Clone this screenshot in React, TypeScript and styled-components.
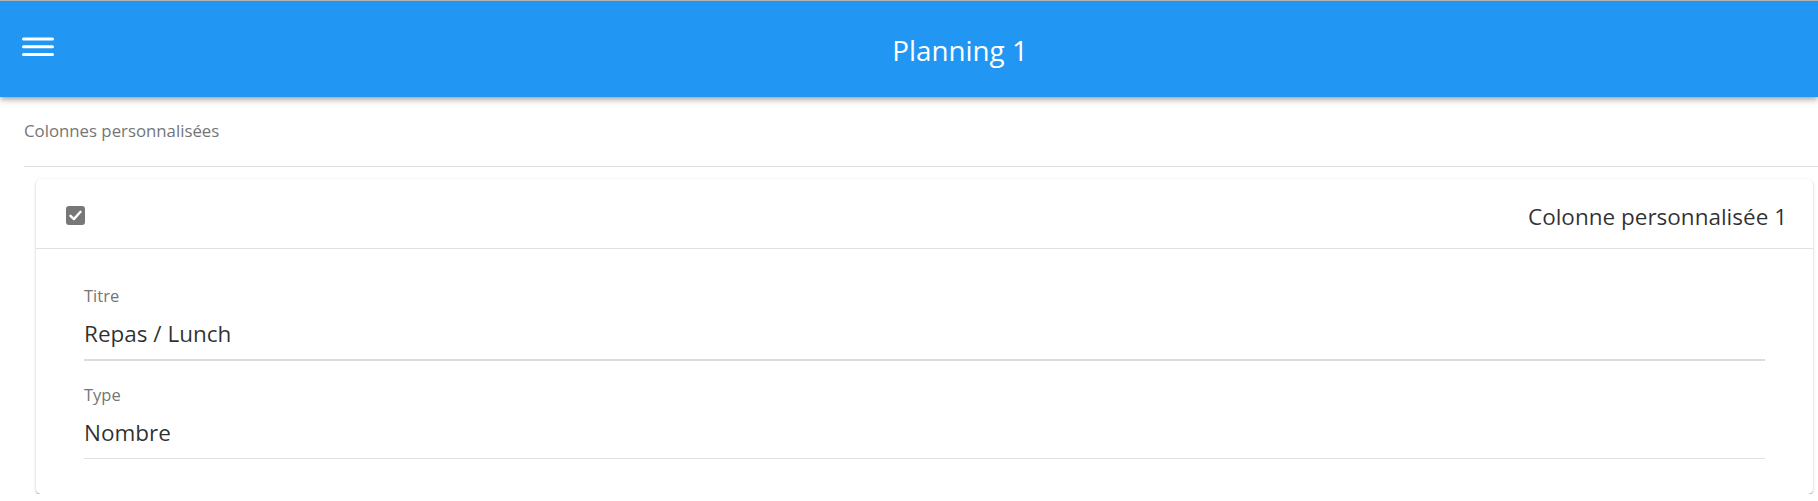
import styled, { createGlobalStyle } from "styled-components";

const GlobalStyle = createGlobalStyle`
    html, body {
        margin: 0;
        padding: 0;
        background: #fff;
        font-family: "Open Sans", "Noto Sans", sans-serif;
        color: rgba(0, 0, 0, 0.82);
    }
`;

const AppBar = styled.header`
    position: relative;
    z-index: 2;
    display: flex;
    align-items: stretch;
    height: 96px;
    background: #2196f3;
    border-top: 1px solid #b3b3b3;
    box-shadow: 0 2px 4px -1px rgba(0, 0, 0, 0.2), 0 4px 5px 0 rgba(0, 0, 0, 0.14), 0 1px 10px 0 rgba(0, 0, 0, 0.12);
`;

const MenuButton = styled.button`
    width: 102px;
    padding: 34px 0 0 22px;
    border: 0;
    background: none;
    display: flex;
    align-items: flex-start;
    cursor: pointer;
`;

const BarTitle = styled.h1`
    flex: 1;
    margin: 0;
    align-self: center;
    text-align: center;
    color: #fff;
    font-size: 27.8px;
    font-weight: 400;
    line-height: 36px;
    padding-top: 2px;
`;

const Main = styled.main`
    padding: 24px 0 0 24px;
`;

const SectionTitle = styled.div`
    font-size: 16.8px;
    line-height: 20px;
    color: #757575;
`;

const Divider = styled.hr`
    margin: 25px 0 0;
    border: 0;
    border-top: 1px solid #dedede;
`;

const Card = styled.section`
    margin: 12px 5px 0 12px;
    background: #fff;
    border-radius: 5px;
    box-shadow: 0 1px 3px 0 rgba(0, 0, 0, 0.2), 0 1px 1px 0 rgba(0, 0, 0, 0.14), 0 2px 1px -1px rgba(0, 0, 0, 0.12);
`;

const CardHeader = styled.div`
    display: flex;
    align-items: center;
    justify-content: space-between;
    height: 69px;
    padding: 0 26px 0 30px;
    border-bottom: 1px solid #e0e0e0;
`;

const CheckBox = styled.span<{ $checked: boolean }>`
    display: inline-flex;
    align-items: center;
    justify-content: center;
    width: 19px;
    height: 19px;
    margin-top: 3px;
    border-radius: 3px;
    background: ${({ $checked }) => ($checked ? "#777" : "#fff")};
    border: ${({ $checked }) => ($checked ? "none" : "2px solid #777")};
    box-sizing: border-box;
`;

const CardTitle = styled.div`
    font-size: 22.5px;
    line-height: 30px;
    margin-top: 6px;
    color: rgba(0, 0, 0, 0.82);
`;

const CardBody = styled.div`
    padding: 37px 48px 35px;
`;

const Field = styled.div<{ $active?: boolean }>`
    padding-bottom: 10px;
    border-bottom: ${({ $active }) => ($active ? "2px solid #dcdcdc" : "1px solid #e0e0e0")};
    & + & {
        margin-top: 24px;
    }
`;

const FieldLabel = styled.div`
    font-size: 16.5px;
    line-height: 20px;
    color: #757575;
`;

const FieldValue = styled.div`
    margin-top: 13px;
    font-size: 22.5px;
    line-height: 30px;
    color: rgba(0, 0, 0, 0.82);
`;

function MenuIcon() {
    return (
        <svg width="32" height="22" viewBox="0 0 32 22" fill="none">
            <path d="M1.5 4h29M1.5 11.8h29M1.5 19.6h29" stroke="#fff" strokeWidth="3" strokeLinecap="round" />
        </svg>
    );
}

function Check() {
    return (
        <svg width="13" height="11" viewBox="0 0 13 11" fill="none">
            <path d="M1.5 5.8l3.4 3.3L11.5 1.8" stroke="#fff" strokeWidth="2.4" strokeLinecap="round" strokeLinejoin="round" />
        </svg>
    );
}

const fields = [
    { label: "Titre", value: "Repas / Lunch", active: true },
    { label: "Type", value: "Nombre", active: false },
];

function App() {
    return (
        <>
            <GlobalStyle />
            <AppBar>
                <MenuButton type="button" aria-label="menu">
                    <MenuIcon />
                </MenuButton>
                <BarTitle>Planning 1</BarTitle>
            </AppBar>
            <Main>
                <SectionTitle>Colonnes personnalisées</SectionTitle>
                <Divider />
                <Card>
                    <CardHeader>
                        <CheckBox $checked={true}>
                            <Check />
                        </CheckBox>
                        <CardTitle>Colonne personnalisée 1</CardTitle>
                    </CardHeader>
                    <CardBody>
                        {fields.map((f) => (
                            <Field key={f.label} $active={f.active}>
                                <FieldLabel>{f.label}</FieldLabel>
                                <FieldValue>{f.value}</FieldValue>
                            </Field>
                        ))}
                    </CardBody>
                </Card>
            </Main>
        </>
    );
}

export default App;
